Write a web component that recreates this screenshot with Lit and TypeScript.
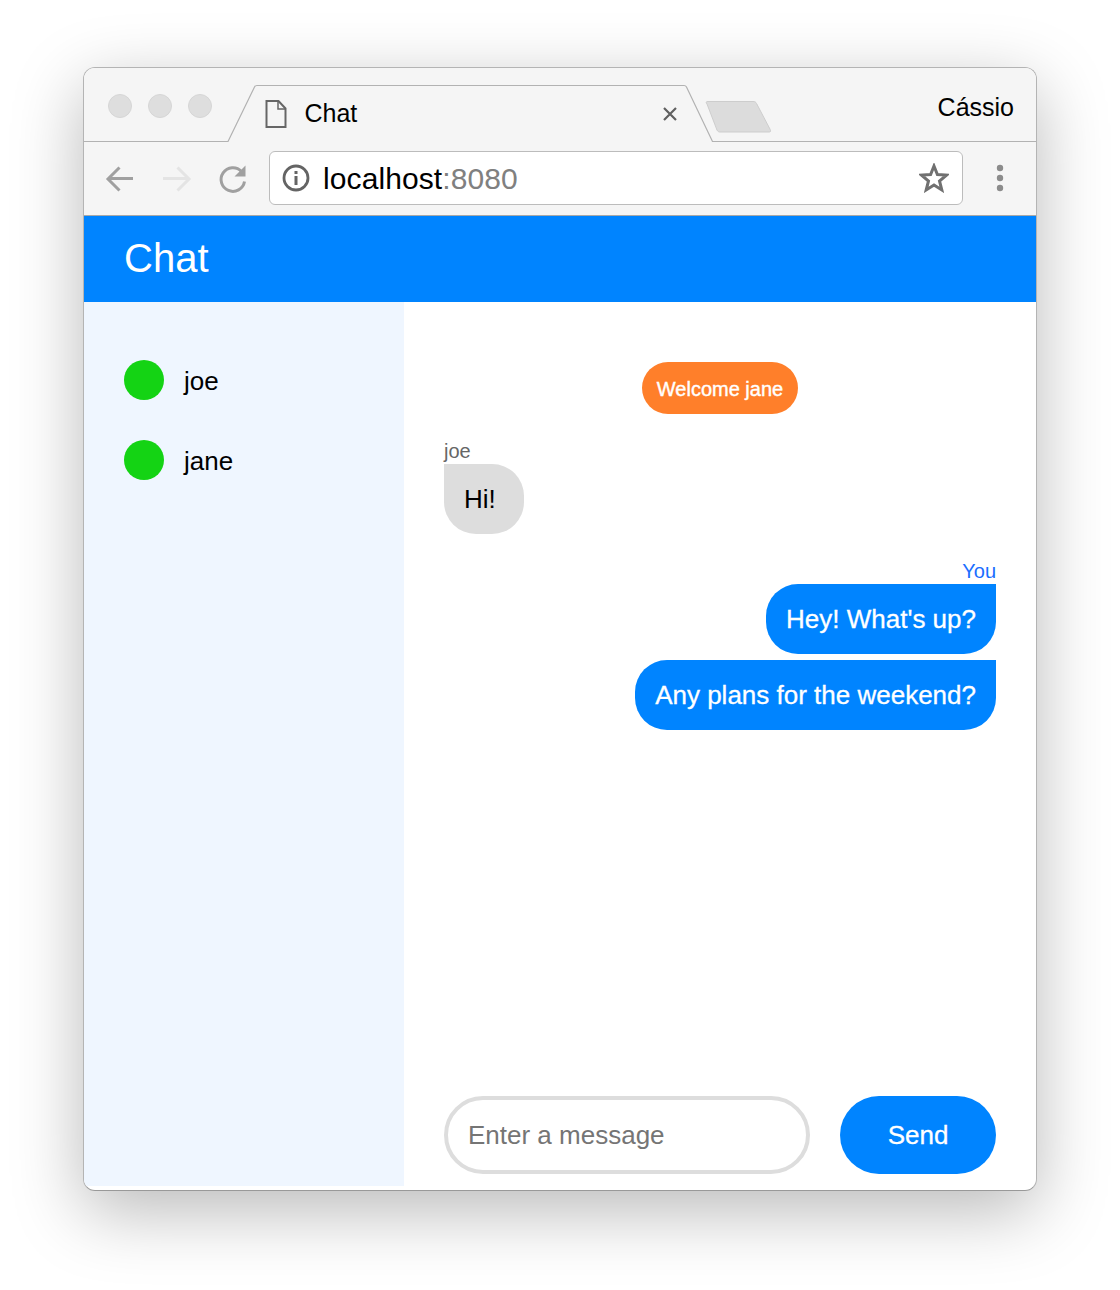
import { LitElement, html, css } from "lit";
import { customElement } from "lit/decorators.js";

const users = ["joe", "jane"];

@customElement("app-root")
export class AppRoot extends LitElement {
  static styles = css`
    :host { display: block; width: 1120px; height: 1290px; overflow: hidden; background: #fff;
      font-family: "Liberation Sans", Arial, sans-serif; color: #000; }
    * { box-sizing: border-box; }
    .stage { padding: 67px 83px 0; }
    .window { width: 954px; height: 1124px; border: 1px solid #b4b4b4; border-bottom-color: #999; border-radius: 12px;
      box-shadow: 0 20px 70px rgba(0,0,0,.28); background: #fff; overflow: hidden; display: flex; flex-direction: column; }
    .strip { position: relative; height: 74px; background: #f5f5f5; display: flex; align-items: flex-start; flex: none; }
    .strip-art { position: absolute; left: 0; top: 0; }
    .lights { display: flex; gap: 16px; padding: 26px 0 0 24px; }
    .light { width: 24px; height: 24px; border-radius: 50%; background: #dedede; border: 1px solid #d6d6d6; }
    .doc { position: absolute; left: 181px; top: 32px; }
    .tab-title { position: absolute; left: 220.5px; top: 30px; font-size: 25px; line-height: 30px; }
    .close { position: absolute; left: 578px; top: 38px; }
    .profile { position: absolute; right: 22px; top: 24px; font-size: 25px; line-height: 30px; }
    .toolbar { height: 74px; background: #f5f5f5; border-bottom: 1px solid #a8a8a8; display: flex; align-items: flex-start; flex: none; }
    .nav { flex: none; margin-top: 20px; }
    .omnibox { margin: 9px 0 0 0; width: 694px; height: 54px; background: #fff; border: 1px solid #bcbcbc; border-radius: 6px;
      display: flex; align-items: center; flex: none; padding-left: 12px; }
    .url { margin-left: 13px; font-size: 30px; line-height: 36px; flex: 1; letter-spacing: .1px; padding-top: 2px; }
    .port { color: #808080; }
    .star { margin-right: 13px; }
    .menu { margin: 20px 0 0 22px; flex: none; }
    .header { height: 86px; background: #0084ff; color: #fff; font-size: 40px; line-height: 84px; padding-left: 40px; flex: none; }
    .body { flex: 1; display: flex; min-height: 0; }
    .sidebar { width: 320px; height: 884px; background: #eff6ff; padding: 58px 40px 0; display: flex; flex-direction: column; gap: 40px; flex: none; }
    .user { display: flex; align-items: center; gap: 20px; font-size: 26px; height: 40px; }
    .name { padding-top: 2px; }
    .dot { width: 40px; height: 40px; border-radius: 50%; background: #14d314; flex: none; }
    .main { flex: 1; display: flex; flex-direction: column; padding: 60px 40px 16px; min-width: 0; }
    .messages { flex: 1; display: flex; flex-direction: column; }
    .notice { align-self: center; height: 52px; line-height: 54px; padding: 0 15px; border-radius: 26px; background: #ff7f2a; color: #fff; font-size: 20px; -webkit-text-stroke: .4px #fff; }
    .group { display: flex; flex-direction: column; margin-top: 26px; align-items: flex-start; }
    .group.mine { align-items: flex-end; }
    .label { font-size: 20px; line-height: 22px; height: 24px; color: #666; }
    .mine .label { color: #1a6eff; }
    .bubble { height: 70px; min-width: 80px; line-height: 70px; padding: 0 20px; font-size: 26px; background: #ddd; color: #000; border-radius: 0 32px 32px 32px; }
    .mine .bubble { background: #0084ff; color: #fff; border-radius: 32px 0 32px 32px; -webkit-text-stroke: .3px #fff; }
    .mine .bubble + .bubble { margin-top: 6px; }
    .form { display: flex; gap: 30px; flex: none; }
    .input { flex: 1; min-width: 0; height: 78px; border: 4px solid #ddd; border-radius: 39px; padding: 0 20px; font: 26px "Liberation Sans", Arial, sans-serif; outline: none; background: #fff; }
    .input::placeholder { color: #757575; opacity: 1; }
    .send { width: 156px; height: 78px; border: 0; border-radius: 39px; background: #0084ff; color: #fff; font: 26px "Liberation Sans", Arial, sans-serif; -webkit-text-stroke: .3px #fff; padding: 0; }
  `;

  render() {
    return html`<div class="stage"><div class="window">
      <div class="strip">
        <svg class="strip-art" width="952" height="74" viewBox="0 0 952 74" fill="none">
          <path d="M0 73.5H144L170.5 19C171 18 171.6 17.5 173 17.5H600C601.5 17.5 602 18 602.5 19L628.5 73.5H952" stroke="#b2b2b2" stroke-width="1.2"/>
          <path d="M623 36C621.6 34 622 33.500 624 33.500H669C671 33.500 671.8 34 672.6 35.6L686.2 61.500C687 63.500 686.6 64 685 64H636C634.500 64 633.800 63.500 633 62.100Z" fill="#dcdcdc" stroke="#cdcdcd"/>
        </svg>
        <div class="lights"><span class="light"></span><span class="light"></span><span class="light"></span></div>
        <svg class="doc" width="22" height="28" viewBox="0 0 22 28" fill="none" stroke="#666" stroke-width="2">
          <path d="M1.5 1H13.5L20.5 8.5V27H1.5Z"/><path d="M13 1V9H20.5" stroke-width="1.5"/>
        </svg>
        <span class="tab-title">Chat</span>
        <svg class="close" width="16" height="16" viewBox="0 0 16 16" stroke="#606060" stroke-width="2.2"><path d="M2 2L14 14M14 2L2 14"/></svg>
        <span class="profile">Cássio</span>
      </div>
      <div class="toolbar">
        <svg class="nav" width="185" height="34" viewBox="0 0 185 34" fill="none" stroke-width="3">
          <path d="M49 16.500H24.500M35.500 5.500L24 17L35.500 28.500" stroke="#a0a0a0"/>
          <path d="M79 16.500H104.500M93.500 5.500L105 17L93.500 28.500" stroke="#e4e4e4"/>
          <path d="M157.500 9.500A11.800 11.800 0 1 0 160.500 19.500" stroke="#a0a0a0"/>
          <path d="M161.500 3.500V14.500H150.500Z" fill="#a0a0a0"/>
        </svg>
        <div class="omnibox">
          <svg width="28" height="28" viewBox="0 0 28 28" fill="none">
            <circle cx="14" cy="14" r="12" stroke="#646464" stroke-width="2.800"/>
            <rect x="12.500" y="12" width="3" height="9" fill="#646464"/><rect x="12.500" y="7" width="3" height="3" fill="#646464"/>
          </svg>
          <span class="url">localhost<span class="port">:8080</span></span>
          <svg class="star" width="30" height="30" viewBox="0 0 30 30" fill="none">
            <path d="M15 3L18.400 11.500L27.500 12.100L20.500 18L22.800 26.900L15 22L7.200 26.900L9.500 18L2.500 12.100L11.600 11.500Z" stroke="#707070" stroke-width="3"/>
          </svg>
        </div>
        <svg class="menu" width="32" height="32" viewBox="0 0 32 32" fill="#8c8c8c">
          <circle cx="15" cy="6" r="3.200"/><circle cx="15" cy="16" r="3.200"/><circle cx="15" cy="26" r="3.200"/>
        </svg>
      </div>
      <div class="header">Chat</div>
      <div class="body">
        <div class="sidebar">
          ${users.map(u => html`<div class="user"><span class="dot"></span><span class="name">${u}</span></div>`)}
        </div>
        <div class="main">
          <div class="messages">
            <div class="notice">Welcome jane</div>
            <div class="group"><div class="label">joe</div><div class="bubble">Hi!</div></div>
            <div class="group mine"><div class="label">You</div><div class="bubble">Hey! What's up?</div><div class="bubble">Any plans for the weekend?</div></div>
          </div>
          <div class="form">
            <input class="input" placeholder="Enter a message" />
            <button class="send">Send</button>
          </div>
        </div>
      </div>
    </div></div>`;
  }
}
